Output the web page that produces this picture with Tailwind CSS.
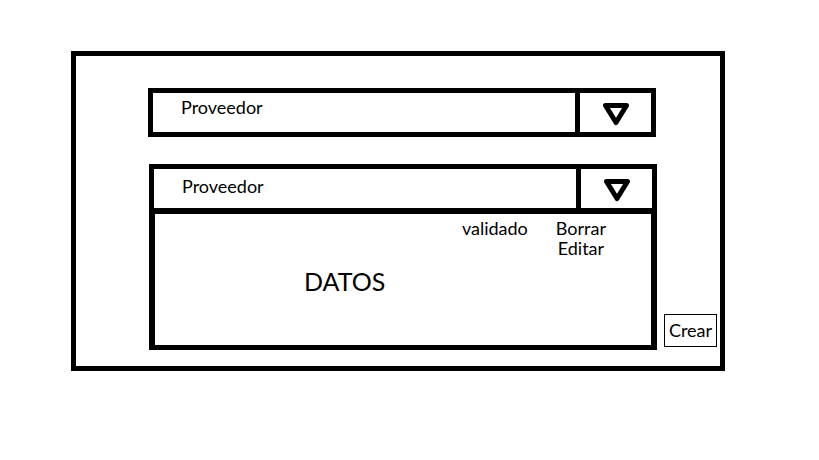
<!DOCTYPE html>
<html lang="es">
<head>
<meta charset="utf-8">
<meta name="viewport" content="width=device-width, initial-scale=1">
<title>Proveedores</title>
<script src="https://cdn.jsdelivr.net/npm/@tailwindcss/browser@4"></script>
</head>
<body class="bg-white font-[Lato,sans-serif] text-lg leading-5 text-black">
<main class="mt-[51px] mr-[94px] ml-[71px] flex gap-[7px] border-5 border-black pt-8 pr-[3px] pb-4 pl-[72px]">
  <div class="min-w-0 flex-1">
    <div class="mr-px flex border-5 border-black">
      <select aria-label="Proveedor" class="h-[39px] min-w-0 flex-1 appearance-none bg-white pb-3 pl-7 outline-none">
        <option>Proveedor</option>
      </select>
      <span class="flex w-19 items-center justify-center border-l-5 border-black">
        <svg class="size-[27px]" viewBox="0 0 27 27" fill="none" stroke="black" stroke-width="5" stroke-linejoin="round" aria-hidden="true"><path d="M3.500 6.500H24.500L14 23.500Z"/></svg>
      </span>
    </div>
    <section class="mt-[27px] ml-px">
      <div class="flex border-5 border-b-6 border-black">
        <select aria-label="Proveedor con datos" class="h-[39px] min-w-0 flex-1 appearance-none bg-white pb-1.5 pl-7 outline-none">
          <option>Proveedor</option>
        </select>
        <span class="flex w-19 items-center justify-center border-l-5 border-black">
          <svg class="size-[27px]" viewBox="0 0 27 27" fill="none" stroke="black" stroke-width="5" stroke-linejoin="round" aria-hidden="true"><path d="M3.500 6.500H24.500L14 23.500Z"/></svg>
        </span>
      </div>
      <div class="border-x-6 border-b-5 border-black pt-1 pr-[45px] pb-[49px]">
        <div class="flex items-start justify-end gap-7">
          <span>validado</span>
          <div class="flex flex-col items-center">
            <button type="button">Borrar</button>
            <button type="button">Editar</button>
          </div>
        </div>
        <h1 class="mt-2 pl-[149px] text-[25px] leading-[30px]">DATOS</h1>
      </div>
    </section>
  </div>
  <button type="button" class="mb-[3px] h-[33px] w-[53px] self-end border border-black pb-0.5">Crear</button>
</main>
</body>
</html>
